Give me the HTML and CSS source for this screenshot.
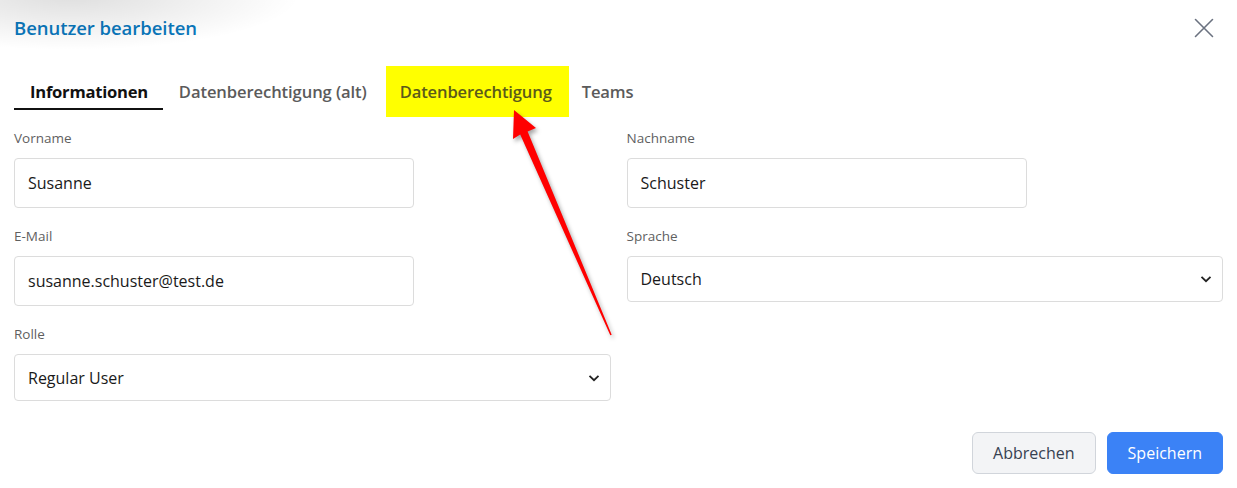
FILE: index.html
```html
<!DOCTYPE html>
<html lang="de">
<head>
<meta charset="utf-8">
<title>Benutzer bearbeiten</title>
<link rel="stylesheet" href="styles.css">
</head>
<body>
<div class="modal">
  <div class="shade"></div>
  <header class="head">
    <h1 class="title">Benutzer bearbeiten</h1>
    <button class="close" aria-label="Schließen">
      <svg width="20" height="20" viewBox="0 0 20 20"><path d="M1.5 1.5 L18.5 18.5 M18.5 1.5 L1.5 18.5" stroke="#6b7280" stroke-width="1.6" fill="none" stroke-linecap="round"/></svg>
    </button>
  </header>
  <nav class="tabs">
    <span class="tab active">Informationen</span>
    <span class="tab alt">Datenberechtigung (alt)</span>
    <span class="tab marked">Datenberechtigung</span>
    <span class="tab last">Teams</span>
  </nav>
  <form class="form">
    <div class="field">
      <label class="label">Vorname</label>
      <div class="input short">Susanne</div>
    </div>
    <div class="field">
      <label class="label">Nachname</label>
      <div class="input short">Schuster</div>
    </div>
    <div class="field">
      <label class="label">E-Mail</label>
      <div class="input short">susanne.schuster@test.de</div>
    </div>
    <div class="field">
      <label class="label">Sprache</label>
      <div class="input select sel-s"><span>Deutsch</span>
        <svg width="12" height="8" viewBox="0 0 12 8"><path d="M1.5 1.8 L6 6.2 L10.5 1.8" stroke="#222" stroke-width="1.8" fill="none"/></svg>
      </div>
    </div>
    <div class="field">
      <label class="label">Rolle</label>
      <div class="input select"><span>Regular User</span>
        <svg width="12" height="8" viewBox="0 0 12 8"><path d="M1.5 1.8 L6 6.2 L10.5 1.8" stroke="#222" stroke-width="1.8" fill="none"/></svg>
      </div>
    </div>
  </form>
  <footer class="foot">
    <button class="btn cancel" type="button">Abbrechen</button>
    <button class="btn save" type="button">Speichern</button>
  </footer>
  <svg class="arrow" width="1237" height="488" viewBox="0 0 1237 488">
    <polygon points="514,110 536,128 527.6,131.4 611.7,334.7 610.3,335.3 520.2,134.6 513,139" fill="#ff0000"/>
  </svg>
</div>
</body>
</html>
```

FILE: styles.css
```css
* { box-sizing: border-box; }
html, body { margin: 0; padding: 0; background: #fff; }
body {
  font-family: "Open Sans", "Noto Sans", sans-serif;
  color: #1f1f1f;
  width: 1237px;
  height: 488px;
  overflow: hidden;
}
.modal {
  position: relative;
  padding: 0 14px;
  height: 488px;
}
.shade {
  position: absolute;
  left: 0;
  top: 0;
  width: 320px;
  height: 90px;
  background: radial-gradient(ellipse 230px 55px at 70px -5px, rgba(0,0,0,0.13), rgba(0,0,0,0) 100%);
  pointer-events: none;
}
.head {
  display: flex;
  justify-content: space-between;
  align-items: center;
  height: 56px;
}
.title {
  margin: 0;
  font-size: 18.5px;
  font-weight: 600;
  color: #0a78bd;
  line-height: 26px;
  letter-spacing: -0.05px;
}
.close {
  border: 0;
  background: transparent;
  padding: 0;
  margin-right: 9px;
  width: 20px;
  height: 20px;
  display: flex;
}
.tabs {
  display: flex;
  align-items: flex-start;
  height: 54px;
  margin-top: 10px;
}
.tab {
  font-size: 16.6px;
  font-weight: 600;
  color: #5b5b5b;
  line-height: 20px;
  padding: 16px 16px 6px;
  border-bottom: 2px solid transparent;
  white-space: nowrap;
  letter-spacing: -0.15px;
}
.tab.active {
  color: #111;
  font-weight: 700;
  border-bottom-color: #111;
  padding: 16px 15px 6px 16px;
  letter-spacing: -0.25px;
}
.tab.alt { padding-right: 19px; letter-spacing: -0.1px; }
.tab.marked {
  background: #ffff00;
  color: #5b5a1a;
  padding: 16px 17px 15px 14px;
  border-bottom: 0;
}
.tab.last { padding-left: 13px; }
.form {
  display: grid;
  grid-template-columns: 1fr 1fr;
  column-gap: 16px;
  row-gap: 18px;
  margin: 8px 0 0;
}
.field {
  display: flex;
  flex-direction: column;
  align-items: flex-start;
}
.label {
  font-size: 13.5px;
  color: #5f5f5f;
  line-height: 20px;
  margin-bottom: 10px;
}
.input {
  border: 1px solid #dcdcdc;
  border-radius: 4px;
  height: 50px;
  padding: 0 13px;
  display: flex;
  align-items: center;
  font-size: 16px;
  color: #1a1a1a;
  width: 100%;
}
.input.short { width: 400px; }
.select {
  justify-content: space-between;
  padding-right: 10px;
  height: 47px;
}
.select.sel-s { height: 46px; }
.foot {
  display: flex;
  justify-content: flex-end;
  gap: 11px;
  margin-top: 31px;
}
.btn {
  font-family: inherit;
  font-size: 16px;
  height: 42px;
  border-radius: 6px;
  padding: 0 20px;
  cursor: pointer;
}
.cancel {
  background: #f3f4f6;
  border: 1px solid #d1d5db;
  color: #374151;
}
.save {
  background: #3b82f6;
  border: 1px solid #3b82f6;
  color: #fff;
}
.arrow {
  position: absolute;
  left: 0;
  top: 0;
  pointer-events: none;
  filter: drop-shadow(2px 3px 2px rgba(0,0,0,0.35));
}
```
